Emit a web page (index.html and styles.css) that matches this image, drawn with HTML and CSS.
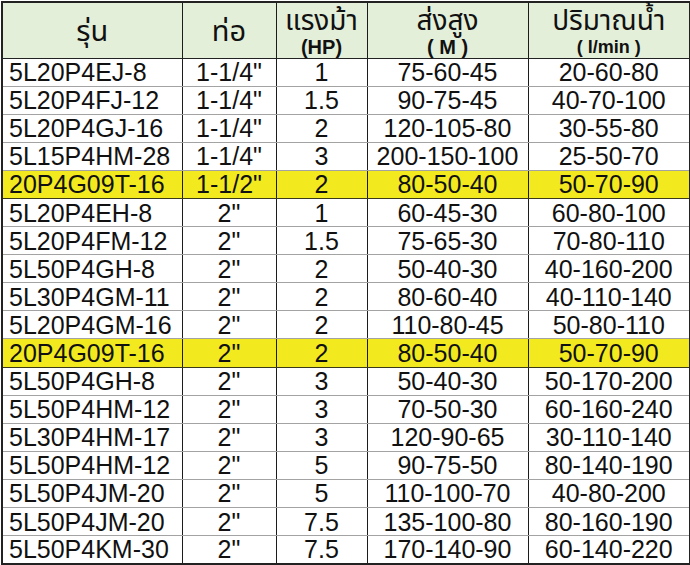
FILE: index.html
```html
<!DOCTYPE html>
<html lang="th">
<head>
<meta charset="utf-8">
<title>ตารางปั๊ม</title>
<link rel="stylesheet" href="styles.css">
</head>
<body>
<table class="spec">
  <colgroup>
    <col class="c-model"><col class="c-pipe"><col class="c-hp"><col class="c-head"><col class="c-flow">
  </colgroup>
  <thead>
    <tr>
      <th><span class="th-main">รุ่น</span></th>
      <th><span class="th-main">ท่อ</span></th>
      <th><span class="th-top">แรงม้า</span><span class="th-sub">(HP)</span></th>
      <th><span class="th-top">ส่งสูง</span><span class="th-sub">( M )</span></th>
      <th><span class="th-top">ปริมาณน้ำ</span><span class="th-sub th-small">( l/min )</span></th>
    </tr>
  </thead>
  <tbody>
    <tr><td>5L20P4EJ-8</td><td>1-1/4"</td><td>1</td><td>75-60-45</td><td>20-60-80</td></tr>
    <tr><td>5L20P4FJ-12</td><td>1-1/4"</td><td>1.5</td><td>90-75-45</td><td>40-70-100</td></tr>
    <tr><td>5L20P4GJ-16</td><td>1-1/4"</td><td>2</td><td>120-105-80</td><td>30-55-80</td></tr>
    <tr><td>5L15P4HM-28</td><td>1-1/4"</td><td>3</td><td>200-150-100</td><td>25-50-70</td></tr>
    <tr class="hl"><td>20P4G09T-16</td><td>1-1/2"</td><td>2</td><td>80-50-40</td><td>50-70-90</td></tr>
    <tr><td>5L20P4EH-8</td><td>2"</td><td>1</td><td>60-45-30</td><td>60-80-100</td></tr>
    <tr><td>5L20P4FM-12</td><td>2"</td><td>1.5</td><td>75-65-30</td><td>70-80-110</td></tr>
    <tr><td>5L50P4GH-8</td><td>2"</td><td>2</td><td>50-40-30</td><td>40-160-200</td></tr>
    <tr><td>5L30P4GM-11</td><td>2"</td><td>2</td><td>80-60-40</td><td>40-110-140</td></tr>
    <tr><td>5L20P4GM-16</td><td>2"</td><td>2</td><td>110-80-45</td><td>50-80-110</td></tr>
    <tr class="hl"><td>20P4G09T-16</td><td>2"</td><td>2</td><td>80-50-40</td><td>50-70-90</td></tr>
    <tr><td>5L50P4GH-8</td><td>2"</td><td>3</td><td>50-40-30</td><td>50-170-200</td></tr>
    <tr><td>5L50P4HM-12</td><td>2"</td><td>3</td><td>70-50-30</td><td>60-160-240</td></tr>
    <tr><td>5L30P4HM-17</td><td>2"</td><td>3</td><td>120-90-65</td><td>30-110-140</td></tr>
    <tr><td>5L50P4HM-12</td><td>2"</td><td>5</td><td>90-75-50</td><td>80-140-190</td></tr>
    <tr><td>5L50P4JM-20</td><td>2"</td><td>5</td><td>110-100-70</td><td>40-80-200</td></tr>
    <tr><td>5L50P4JM-20</td><td>2"</td><td>7.5</td><td>135-100-80</td><td>80-160-190</td></tr>
    <tr><td>5L50P4KM-30</td><td>2"</td><td>7.5</td><td>170-140-90</td><td>60-140-220</td></tr>
  </tbody>
</table>
</body>
</html>
```

FILE: styles.css
```css
html, body {
  margin: 0;
  padding: 0;
  background: #ffffff;
}

body {
  padding: 1px 0 0 1px;
  font-family: "Liberation Sans", Arial, sans-serif;
  color: #111;
}

.spec {
  border-collapse: collapse;
  table-layout: fixed;
  width: 688px;
  border: 2px solid #222;
}

.c-model { width: 180px; }
.c-pipe { width: 94px; }
.c-hp { width: 91px; }
.c-head { width: 161px; }
.c-flow { width: 162px; }

.spec th,
.spec td {
  border-left: 1.5px solid #1c1c1c;
  border-right: 1.5px solid #1c1c1c;
  padding: 0;
}

.spec thead tr {
  height: 56px;
  background: #e3efd9;
}

.spec th {
  border-bottom: 1.5px solid #222;
  font-weight: normal;
  text-align: center;
  vertical-align: top;
  line-height: 1;
}

.th-main {
  display: block;
  font-family: "Noto Sans Thai", "Noto Sans", "DejaVu Sans", sans-serif;
  font-size: 29px;
  line-height: 30px;
  padding-top: 14px;
}

.th-top {
  display: block;
  font-family: "Noto Sans Thai", "Noto Sans", "DejaVu Sans", sans-serif;
  font-size: 28px;
  line-height: 26px;
  padding-top: 6px;
}

.th-sub {
  display: block;
  font-weight: bold;
  font-size: 20px;
  line-height: 20px;
  padding-top: 2px;
}

.th-small {
  font-size: 18px;
}

.spec tbody tr {
  height: 28.1px;
}

.spec td {
  border-bottom: 1px solid #a3a3a3;
  font-size: 25px;
  line-height: 26px;
  text-align: center;
  vertical-align: middle;
  white-space: nowrap;
}

.spec td:first-child {
  text-align: left;
  padding-left: 6px;
}

.spec tr.hl {
  background: #f2ea1e;
}

.spec tr.hl td {
  border-top: 1.5px solid #3a3a1a;
  border-bottom: 1.5px solid #3a3a1a;
}
```
